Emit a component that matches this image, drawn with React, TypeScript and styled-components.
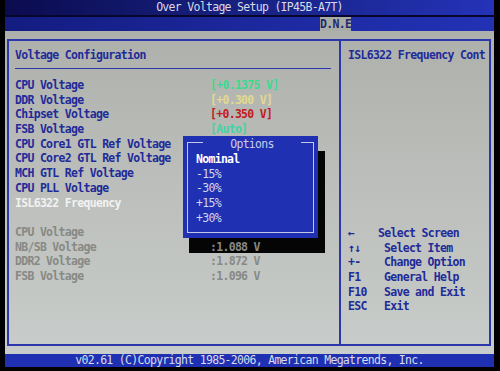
import React from 'react';
import styled, { createGlobalStyle } from 'styled-components';

const GlobalStyle = createGlobalStyle`
  html, body {
    margin: 0;
    padding: 0;
    background: #000;
  }
  body {
    font-family: "DejaVu Sans Mono", "Liberation Mono", monospace;
    font-size: 11.5px;
    letter-spacing: -0.7px;
  }
`;

type Tone = 'navy' | 'dim' | 'white' | 'green' | 'yellow' | 'red' | 'aqua';

const tones: Record<Tone, string> = {
  navy: '#1f2b98',
  dim: '#878985',
  white: '#f2f2f2',
  green: '#3fd98f',
  yellow: '#e2d98e',
  red: '#c41a1c',
  aqua: '#45d3a4',
};

const settings: { label: string; value?: string; tone?: Tone; labelTone?: Tone }[] = [
  { label: 'CPU Voltage', value: '[+0.1375 V]', tone: 'green' },
  { label: 'DDR Voltage', value: '[+0.300 V]', tone: 'yellow' },
  { label: 'Chipset Voltage', value: '[+0.350 V]', tone: 'red' },
  { label: 'FSB Voltage', value: '[Auto]', tone: 'aqua' },
  { label: 'CPU Core1 GTL Ref Voltage' },
  { label: 'CPU Core2 GTL Ref Voltage' },
  { label: 'MCH GTL Ref Voltage' },
  { label: 'CPU PLL Voltage' },
  { label: 'ISL6322 Frequency', labelTone: 'white' },
];

const readings = [
  { label: 'CPU Voltage', value: '' },
  { label: 'NB/SB Voltage', value: ':1.088 V' },
  { label: 'DDR2 Voltage', value: ':1.872 V' },
  { label: 'FSB Voltage', value: ':1.096 V' },
];

const options = ['Nominal', '-15%', '-30%', '+15%', '+30%'];

const help = [
  { key: '←', text: 'Select Screen', pull: true },
  { key: '↑↓', text: 'Select Item' },
  { key: '+-', text: 'Change Option' },
  { key: 'F1', text: 'General Help' },
  { key: 'F10', text: 'Save and Exit' },
  { key: 'ESC', text: 'Exit' },
];

function App() {
  return (
    <Screen>
      <GlobalStyle />
      <TitleBar>Over Voltage Setup (IP45B-A7T)</TitleBar>
      <TitleRule />
      <TabBar>
        <Tab>D.N.E</Tab>
      </TabBar>

      <Body>
        <Panels>
          <MainPanel>
            <Heading>Voltage Configuration</Heading>
            <Rule />
            <List>
              {settings.map((s) => (
                <Row key={s.label}>
                  <Text $tone={s.labelTone || 'navy'}>{s.label}</Text>
                  <Text $tone={s.tone || 'navy'}>{s.value}</Text>
                </Row>
              ))}
              <Row />
              {readings.map((r) => (
                <Row key={r.label}>
                  <Text $tone="dim">{r.label}</Text>
                  <Text $tone="dim">{r.value}</Text>
                </Row>
              ))}
            </List>

            <Shadow />
            <Popup>
              <PopupHead>
                <Corner $side="left" />
                <PopupTitle>Options</PopupTitle>
                <Corner $side="right" />
              </PopupHead>
              <PopupFrame>
                {options.map((o, i) => (
                  <Option key={o} $active={i === 0}>{o}</Option>
                ))}
              </PopupFrame>
            </Popup>
          </MainPanel>

          <HelpPanel>
            <Heading>ISL6322 Frequency Cont</Heading>
            <HelpList>
              {help.map((h) => (
                <HelpRow key={h.text}>
                  <Key>{h.key}</Key>
                  <Desc $pull={h.pull}>{h.text}</Desc>
                </HelpRow>
              ))}
            </HelpList>
          </HelpPanel>
        </Panels>
      </Body>

      <FooterBar>v02.61 (C)Copyright 1985-2006, American Megatrends, Inc.</FooterBar>
    </Screen>
  );
}

export default App;

const Screen = styled.div`
  width: 500px;
  height: 371px;
  box-sizing: border-box;
  padding: 0 6px 4px 5px;
  display: flex;
  flex-direction: column;
  background: #000;
  overflow: hidden;
`;

const TitleBar = styled.div`
  height: 15px;
  line-height: 15px;
  text-align: center;
  color: #d9dae6;
  background: linear-gradient(90deg, #0b0b4e 0%, #16207e 45%, #2433b8 100%);
`;

const TitleRule = styled.div`
  height: 2px;
  background: #07072e;
`;

const TabBar = styled.div`
  height: 14px;
  display: flex;
  background: linear-gradient(90deg, #141c80 0%, #1d2aa2 60%, #2232b4 100%);
`;

const Tab = styled.div`
  margin-left: 315px;
  width: 31px;
  line-height: 14px;
  text-align: center;
  font-weight: bold;
  color: #232b6e;
  background: #a9aba6;
`;

const Body = styled.div`
  flex: 1;
  display: flex;
  padding: 8px 3px 8px 2px;
  background: linear-gradient(180deg, #aeb0ac 0%, #bcbfbb 50%, #c8ccca 100%);
`;

const Panels = styled.div`
  flex: 1;
  display: grid;
  grid-template-columns: 332px 1fr;
  border: 2px solid #2b37aa;
`;

const MainPanel = styled.div`
  position: relative;
  border-right: 2px solid #2b37aa;
  padding: 7px 8px 0 6px;
`;

const Heading = styled.div`
  line-height: 15px;
  font-weight: bold;
  color: ${tones.navy};
  white-space: nowrap;
`;

const Rule = styled.div`
  height: 1px;
  margin: 5px 0 9px;
  background: #2b37aa;
`;

const List = styled.div`
  position: relative;
  z-index: 1;
`;

const Row = styled.div`
  display: grid;
  grid-template-columns: 195px 1fr;
  height: 14.7px;
  line-height: 14.7px;
`;

const Text = styled.span<{ $tone: Tone }>`
  font-weight: bold;
  white-space: nowrap;
  color: ${(p) => tones[p.$tone]};
`;

const Shadow = styled.div`
  position: absolute;
  left: 180px;
  top: 110px;
  width: 136px;
  height: 102px;
  background: #050505;
  z-index: 0;
`;

const Popup = styled.div`
  position: absolute;
  left: 174px;
  top: 95px;
  width: 135px;
  height: 102px;
  box-sizing: border-box;
  padding: 0 4px 5px 4px;
  display: flex;
  flex-direction: column;
  background: #1f30b2;
  z-index: 2;
`;

const PopupHead = styled.div`
  height: 15px;
  display: flex;
  align-items: flex-end;
`;

const Corner = styled.div<{ $side: 'left' | 'right' }>`
  flex: 0 0 ${(p) => (p.$side === 'left' ? 15 : 12)}px;
  height: 8px;
  border-top: 1px solid #c3c8e6;
  ${(p) => (p.$side === 'left' ? 'border-left' : 'border-right')}: 1px solid #c3c8e6;
`;

const PopupTitle = styled.div`
  flex: 1;
  align-self: stretch;
  line-height: 16px;
  text-align: center;
  color: #c9cde8;
`;

const PopupFrame = styled.div`
  flex: 1;
  padding: 1px 0 0 8px;
  border: 1px solid #c3c8e6;
  border-top: none;
`;

const Option = styled.div<{ $active?: boolean }>`
  height: 14.7px;
  line-height: 14.7px;
  font-weight: ${(p) => (p.$active ? 'bold' : 'normal')};
  color: ${(p) => (p.$active ? '#ffffff' : '#d3d6ea')};
`;

const HelpPanel = styled.div`
  display: flex;
  flex-direction: column;
  padding: 7px 0 0 7px;
`;

const HelpList = styled.div`
  margin-top: 163px;
`;

const HelpRow = styled.div`
  display: grid;
  grid-template-columns: 36px 1fr;
  height: 14.7px;
  line-height: 14.7px;
  font-weight: bold;
  color: ${tones.navy};
`;

const Key = styled.span`
  white-space: nowrap;
`;

const Desc = styled.span<{ $pull?: boolean }>`
  white-space: nowrap;
  margin-left: ${(p) => (p.$pull ? '-6px' : '0')};
`;

const FooterBar = styled.div`
  height: 13px;
  line-height: 13px;
  text-align: center;
  color: #d9dcea;
  background: #1f31b2;
`;
